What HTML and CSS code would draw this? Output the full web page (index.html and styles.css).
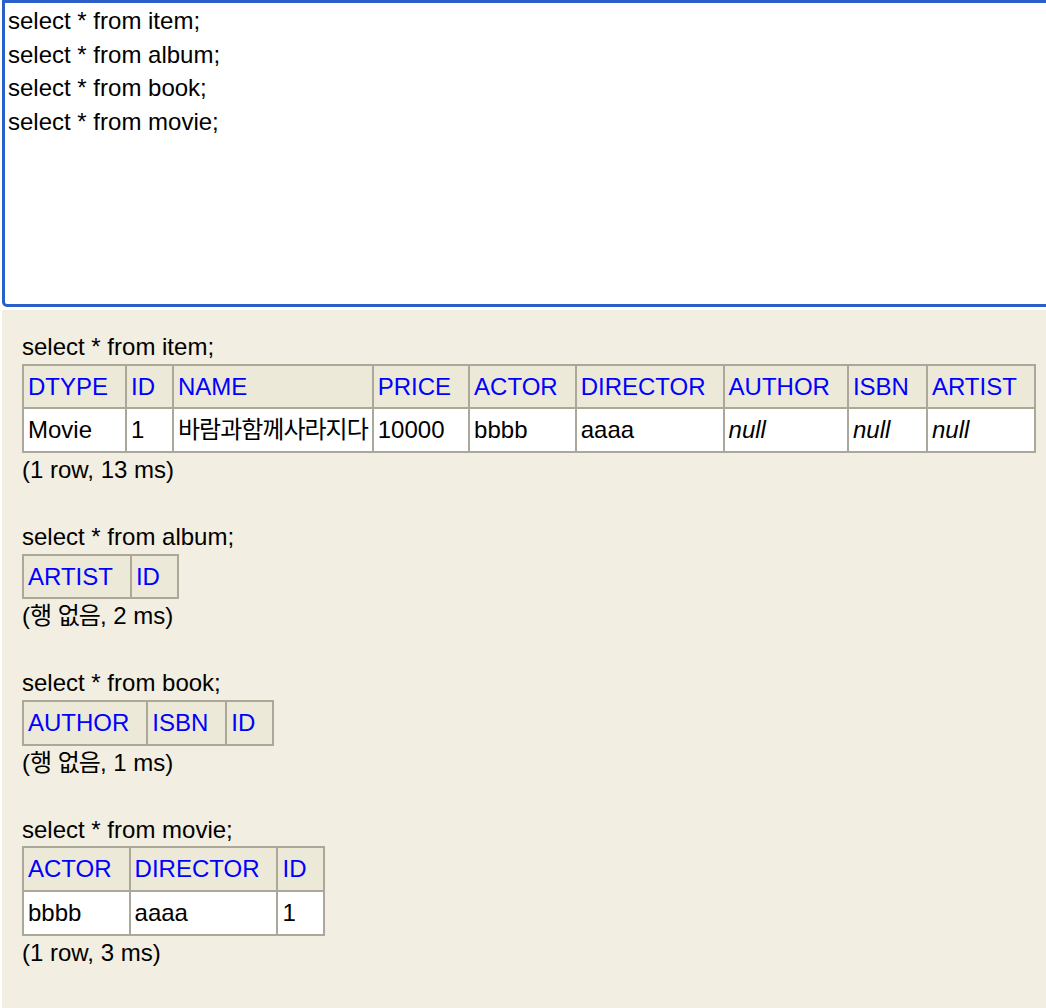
FILE: index.html
```html
<!DOCTYPE html>
<html lang="ko">
<head>
<meta charset="utf-8">
<title>H2 Console</title>
<link rel="stylesheet" href="styles.css">
</head>
<body>
<div class="editor">
<textarea class="sql" spellcheck="false">select * from item;
select * from album;
select * from book;
select * from movie;</textarea>
</div>
<div class="result">
  <section class="block">
    <div class="query">select * from item;</div>
    <table class="rs">
      <tr><th><a href="#">DTYPE</a></th><th><a href="#">ID</a></th><th><a href="#">NAME</a></th><th><a href="#">PRICE</a></th><th><a href="#">ACTOR</a></th><th><a href="#">DIRECTOR</a></th><th><a href="#">AUTHOR</a></th><th><a href="#">ISBN</a></th><th><a href="#">ARTIST</a></th></tr>
      <tr><td>Movie</td><td>1</td><td><span class="ko">바람과함께사라지다</span></td><td>10000</td><td>bbbb</td><td>aaaa</td><td><i>null</i></td><td><i>null</i></td><td><i>null</i></td></tr>
    </table>
    <div class="status">(1 row, 13 ms)</div>
  </section>
  <section class="block">
    <div class="query">select * from album;</div>
    <table class="rs">
      <tr><th><a href="#">ARTIST</a></th><th><a href="#">ID</a></th></tr>
    </table>
    <div class="status">(<span class="ko">행</span> <span class="ko">없음</span>, 2 ms)</div>
  </section>
  <section class="block">
    <div class="query">select * from book;</div>
    <table class="rs">
      <tr><th><a href="#">AUTHOR</a></th><th><a href="#">ISBN</a></th><th><a href="#">ID</a></th></tr>
    </table>
    <div class="status">(<span class="ko">행</span> <span class="ko">없음</span>, 1 ms)</div>
  </section>
  <section class="block">
    <div class="query">select * from movie;</div>
    <table class="rs">
      <tr><th><a href="#">ACTOR</a></th><th><a href="#">DIRECTOR</a></th><th><a href="#">ID</a></th></tr>
      <tr><td>bbbb</td><td>aaaa</td><td>1</td></tr>
    </table>
    <div class="status">(1 row, 3 ms)</div>
  </section>
</div>
</body>
</html>
```
FILE: styles.css
```css
html, body {
  margin: 0;
  padding: 0;
  background: #ffffff;
}
body {
  font-family: "Liberation Sans", Arial, "Noto Sans CJK KR", sans-serif;
  font-size: 24px;
  line-height: 1.4;
  color: #000;
  overflow: hidden;
}
.editor {
  height: 307px;
  padding-left: 2px;
  overflow: hidden;
}
.sql {
  display: block;
  box-sizing: border-box;
  width: 1100px;
  height: 307px;
  margin: 0;
  padding: 1px 3px;
  border: 3px solid #2b5fca;
  border-radius: 0 0 0 5px;
  outline: none;
  resize: none;
  overflow: hidden;
  font-family: "Liberation Sans", Arial, sans-serif;
  font-size: 24px;
  line-height: 1.4;
  color: #000;
  background: #fff;
}
.result {
  box-sizing: border-box;
  margin: 3px 0 0 2px;
  min-height: 701px;
  padding: 20px 0 20px 20px;
  background: #f2eee1;
}
.block {
  margin-bottom: 33.6px;
}
.query,
.status {
  height: 33.6px;
  white-space: nowrap;
}
.rs {
  border-collapse: collapse;
}
.rs th,
.rs td {
  border: 2px solid #aca899;
  padding: 4px;
  height: 33.6px;
  text-align: left;
  vertical-align: top;
  font-weight: normal;
  white-space: nowrap;
}
.rs th {
  background: #ece9d8;
  padding-right: 17px;
}
.rs td {
  background: #ffffff;
}
.rs th a {
  color: #0000ff;
  text-decoration: none;
}
.ko {
  font-family: "Noto Sans CJK KR", sans-serif;
  letter-spacing: -1px;
  line-height: 1;
}
```
